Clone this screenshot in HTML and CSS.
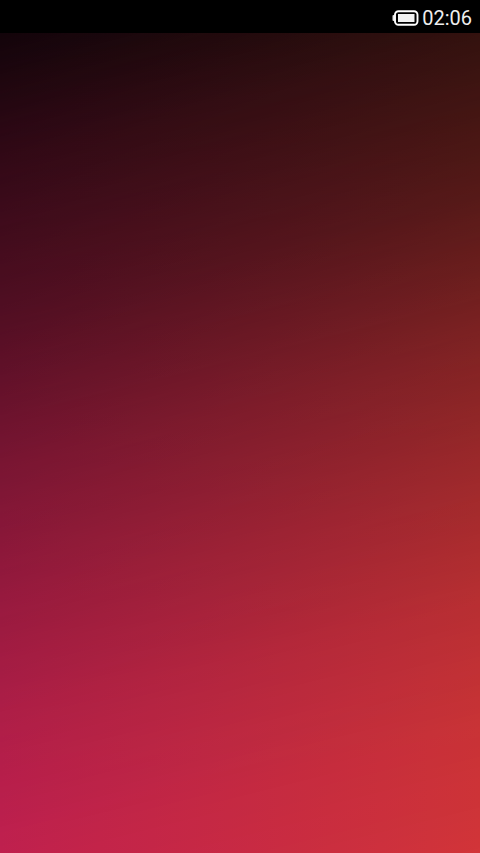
FILE: index.html
```html
<!DOCTYPE html>
<html lang="en">

<head>
  <meta charset="UTF-8">
  <meta name="viewport" content="width=device-width, initial-scale=1.0">
  <title>Lock screen</title>

  <link rel="stylesheet" href="styles.css">
</head>

<body>
  <div class="status-bar">
    <svg class="battery" width="27" height="16" viewBox="0 0 27 16">
      <rect x="0.5" y="5" width="2" height="6" rx="1" fill="#e8e8e8"/>
      <rect x="3" y="1.2" width="22.5" height="13.6" rx="3.5" fill="none" stroke="#fff" stroke-width="1.9"/>
      <rect x="6" y="4" width="16.5" height="8" fill="#f2f2f2"/>
    </svg>
    <span class="time">02:06</span>
  </div>
  <div class="wallpaper">
    <div class="wallpaper-top"></div>
  </div>
</body>

</html>
```

FILE: styles.css
```css
* {
  margin: 0;
  padding: 0;
  box-sizing: border-box;
}

html,
body {
  height: 100%;
  background-color: #000;
  overflow: hidden;
}

body {
  display: flex;
  flex-direction: column;
}

.status-bar {
  display: flex;
  align-items: center;
  justify-content: flex-end;
  gap: 3px;
  height: 33px;
  padding: 3px 8px 0 0;
  background-color: #000;
  color: #eee;
  font-family: Roboto, "Liberation Sans", sans-serif;
  font-size: 20px;
}

.wallpaper {
  position: relative;
  flex: 1;
  background: linear-gradient(to right, #c82252, #d23539);
}

.wallpaper-top {
  position: absolute;
  top: 0;
  right: 0;
  bottom: 0;
  left: 0;
  background: linear-gradient(to right, #12040a, #130b06);
  -webkit-mask-image: linear-gradient(166deg, #000 0%, rgba(0, 0, 0, .83) 13%, rgba(0, 0, 0, .65) 30%, rgba(0, 0, 0, .43) 46%, rgba(0, 0, 0, .27) 60%, rgba(0, 0, 0, .13) 74%, rgba(0, 0, 0, .05) 86%, transparent 100%);
  mask-image: linear-gradient(166deg, #000 0%, rgba(0, 0, 0, .83) 13%, rgba(0, 0, 0, .65) 30%, rgba(0, 0, 0, .43) 46%, rgba(0, 0, 0, .27) 60%, rgba(0, 0, 0, .13) 74%, rgba(0, 0, 0, .05) 86%, transparent 100%);
}
```
